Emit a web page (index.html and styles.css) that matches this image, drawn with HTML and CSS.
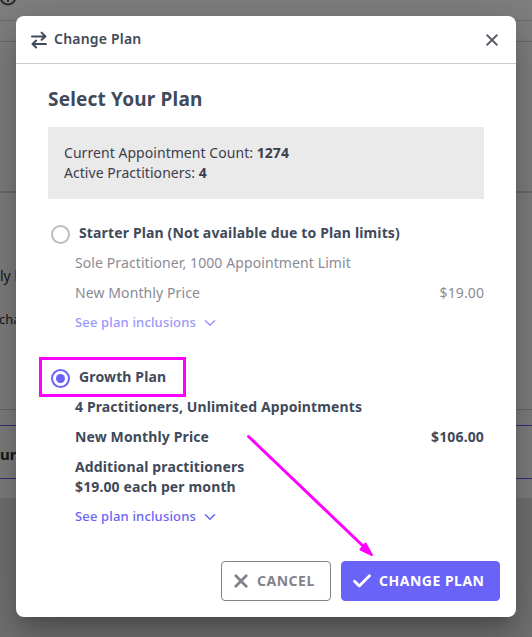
FILE: index.html
```html
<!DOCTYPE html>
<html lang="en">
<head>
    <meta charset="UTF-8">
    <meta name="viewport" content="width=device-width, initial-scale=1.0">
    <title>Change Plan</title>
    <link rel="stylesheet" href="styles.css">
</head>
<body>
    <div class="page">
        <div class="page-top">
            <svg class="info-icon" width="18" height="18" viewBox="0 0 18 18"><circle cx="9" cy="9" r="7.5"/><path d="M9 5v8M6.5 9h5"/></svg>
        </div>
        <div class="page-strip"></div>
        <div class="page-summary"></div>
        <div class="page-details">
            <p class="line-one">ly b</p>
            <p class="line-two">cha</p>
        </div>
        <div class="page-space"></div>
        <div class="page-panel">ur</div>
        <div class="page-end"></div>
    </div>

    <div class="overlay">
        <div class="modal">
            <div class="modal-header">
                <svg width="16" height="18" viewBox="0 0 16 18"><path d="M1 5.4h13M10.6 1.6l3.8 3.8-3.8 3.4M15 13H2M5.2 9.6L1.5 13l3.7 3.5"/></svg>
                <span class="modal-title">Change Plan</span>
                <button class="close" type="button" aria-label="Close">
                    <svg width="12" height="12" viewBox="0 0 12 12"><path d="M1.2 1.2l9.6 9.6M10.8 1.2l-9.6 9.6"/></svg>
                </button>
            </div>

            <div class="modal-body">
                <h1>Select Your Plan</h1>
                <div class="counts">
                    <div>Current Appointment Count: <b>1274</b></div>
                    <div>Active Practitioners: <b>4</b></div>
                </div>

                <div class="plan disabled">
                    <div class="plan-name"><span class="radio"></span>Starter Plan (Not available due to Plan limits)</div>
                    <div class="plan-info">
                        <div>Sole Practitioner, 1000 Appointment Limit</div>
                        <div class="price"><span>New Monthly Price</span><span>$19.00</span></div>
                        <a class="inclusions">See plan inclusions <svg width="12" height="8" viewBox="0 0 12 8"><path d="M1.5 1.8L6 6.2l4.5-4.4"/></svg></a>
                    </div>
                </div>

                <div class="plan selected">
                    <div class="plan-name"><span class="radio"></span>Growth Plan<span class="highlight"></span></div>
                    <div class="plan-info">
                        <div>4 Practitioners, Unlimited Appointments</div>
                        <div class="price"><span>New Monthly Price</span><span>$106.00</span></div>
                        <div>Additional practitioners<br>$19.00 each per month</div>
                        <a class="inclusions">See plan inclusions <svg width="12" height="8" viewBox="0 0 12 8"><path d="M1.5 1.8L6 6.2l4.5-4.4"/></svg></a>
                    </div>
                </div>
            </div>

            <div class="modal-footer">
                <button class="btn cancel" type="button">
                    <svg width="14" height="14" viewBox="0 0 14 14"><path d="M1.8 1.8l10.4 10.4M12.2 1.8L1.8 12.2"/></svg>
                    <span>CANCEL</span>
                </button>
                <button class="btn confirm" type="button">
                    <svg width="18" height="14" viewBox="0 0 18 14"><path d="M1.5 7.2L6.3 12 16.5 1.8"/></svg>
                    <span>CHANGE PLAN</span>
                </button>
            </div>
        </div>
        <svg class="arrow" width="128" height="124" viewBox="0 0 128 124">
            <path class="shaft" d="M2.5 2.5L116 111"/>
            <path class="head" d="M126 121L114.5 115.5 117 112.5 119.5 109.5z"/>
        </svg>
    </div>
</body>
</html>
```

FILE: styles.css
```css
* {
    box-sizing: border-box;
}
body {
    margin: 0;
    height: 637px;
    overflow: hidden;
    font-family: "Noto Sans", sans-serif;
    font-size: 14px;
    line-height: 20px;
    color: #3f4a5a;
}
svg {
    display: block;
    flex-shrink: 0;
    fill: none;
    stroke: currentColor;
    stroke-width: 2;
    stroke-linecap: round;
    stroke-linejoin: round;
}
p {
    margin: 0;
}
.page {
    height: 637px;
    overflow: hidden;
    background-color: #fff;
    color: #333;
}
.page-top {
    display: flex;
    height: 21px;
    border-bottom: 1px solid #d5d5d5;
}
.info-icon {
    margin: -12px 0 0 -1px;
    color: #555;
}
.page-strip {
    height: 21px;
    border-bottom: 1px solid #d5d5d5;
}
.page-summary {
    height: 151px;
    border-bottom: 2px solid #d0d8e4;
}
.page-details {
    height: 217px;
    padding-top: 73px;
    border-bottom: 1px solid #ccc;
    font-size: 13px;
}
.line-one {
    font-size: 14px;
}
.line-two {
    margin-top: 23px;
    margin-left: -1px;
}
.page-space {
    height: 15px;
}
.page-panel {
    height: 54px;
    padding-top: 18px;
    border-top: 1px solid #6a63f6;
    border-bottom: 1px solid #6a63f6;
    font-size: 15px;
    font-weight: bold;
}
.page-end {
    height: 157px;
    margin-top: 19px;
    background-color: #e4e4e4;
}
.overlay {
    position: absolute;
    inset: 0;
    padding: 16px;
    background-color: rgba(0, 0, 0, 0.5);
}
.modal {
    display: flex;
    flex-direction: column;
    height: 601px;
    background-color: #fff;
    border-radius: 8px;
    box-shadow: 0 11px 15px -7px rgba(0, 0, 0, 0.2), 0 24px 38px 3px rgba(0, 0, 0, 0.14), 0 9px 46px 8px rgba(0, 0, 0, 0.12);
}
.modal-header {
    display: flex;
    align-items: center;
    height: 48px;
    padding: 0 18px 0 15px;
    border-bottom: 1px solid #ccc;
}
.modal-title {
    margin: -1px 0 0 7px;
    font-weight: 600;
    letter-spacing: 0.2px;
}
.close {
    margin-left: auto;
    margin-top: 1px;
    padding: 0;
    border: 0;
    background: none;
    color: #5e5e6c;
}
.modal-body {
    flex: 1;
    padding: 23px 32px 0;
}
h1 {
    margin: 0 0 16px;
    font-size: 19px;
    font-weight: 700;
    line-height: 24px;
    letter-spacing: 0.18px;
}
.counts {
    height: 72px;
    padding: 16px;
    background-color: #eaeaea;
    color: #3d3d4d;
    letter-spacing: 0.05px;
}
.plan {
    margin-top: 24px;
}
.plan.selected {
    margin-top: 34px;
    font-weight: 700;
    letter-spacing: 0.13px;
}
.plan-name {
    position: relative;
    display: flex;
    height: 20px;
    font-weight: 700;
    letter-spacing: 0.14px;
}
.radio {
    width: 19px;
    height: 19px;
    margin: 1.5px 9.5px 0 2.5px;
    border: 2px solid #bdbdbd;
    border-radius: 50%;
}
.selected .radio {
    display: grid;
    place-items: center;
    border-color: #6a63f8;
}
.selected .radio::after {
    content: "";
    width: 9px;
    height: 9px;
    border-radius: 50%;
    background-color: #6a63f8;
}
.plan-info {
    display: flex;
    flex-direction: column;
    gap: 10px;
    margin: 10px 0 0 27px;
}
.disabled .plan-info {
    color: #8b8b93;
    letter-spacing: 0.1px;
}
.price {
    display: flex;
    justify-content: space-between;
}
.inclusions {
    display: flex;
    align-items: center;
    gap: 8px;
    margin-top: -1px;
    font-size: 13px;
    font-weight: 500;
    letter-spacing: 0.16px;
    color: #6a63f8;
}
.inclusions svg {
    margin-top: 2px;
    stroke-width: 1.5;
}
.disabled .inclusions {
    margin-bottom: 1px;
    color: #9b97fa;
}
.modal-footer {
    display: flex;
    justify-content: flex-end;
    gap: 10px;
    padding: 0 16px 16px;
}
.btn {
    display: flex;
    align-items: center;
    height: 40px;
    border: 1px solid #82828c;
    border-radius: 4px;
    font-family: inherit;
    font-size: 14px;
    font-weight: 700;
    letter-spacing: 0.5px;
}
.cancel {
    width: 110px;
    padding: 0 0 0 12px;
    gap: 9px;
    background-color: #fff;
    color: #82828c;
}
.confirm {
    width: 159px;
    padding: 0 0 0 11px;
    gap: 8px;
    border-color: #6a63f8;
    background-color: #6a63f8;
    color: #fff;
}
.btn span {
    margin-top: -1px;
}
.btn svg {
    stroke-width: 2.8;
}
.highlight {
    position: absolute;
    left: -9px;
    top: -10px;
    width: 147px;
    height: 40px;
    border: 3px solid #ff00ff;
}
.arrow {
    position: absolute;
    left: 246px;
    top: 434px;
    color: #ff00ff;
}
.arrow .shaft {
    stroke-width: 3;
}
.arrow .head {
    fill: #ff00ff;
    stroke-width: 2;
}
```
